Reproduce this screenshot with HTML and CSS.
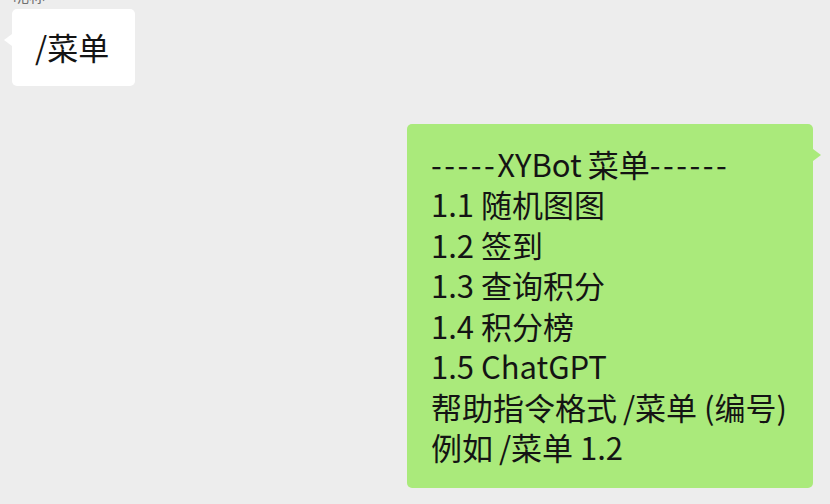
FILE: index.html
```html
<!DOCTYPE html>
<html lang="zh">
<head>
<meta charset="utf-8">
<link rel="stylesheet" href="styles.css">
</head>
<body>
<div class="chat">
  <div class="sender">昵称</div>
  <div class="row row-left">
    <div class="bubble bubble-in">/菜单</div>
  </div>
  <div class="row row-right">
    <div class="bubble bubble-out"><span class="dash">-----</span>XYBot<span class="sp">菜单</span><span class="dash">------</span><br>1.1 随机图图<br>1.2 签到<br>1.3 查询积分<br>1.4 积分榜<br>1.5 ChatGPT<br>帮助指令格式<span class="sp">/菜单</span> (编号)<br>例如<span class="sp">/菜单</span> 1.2</div>
  </div>
</div>
</body>
</html>
```
FILE: styles.css
```css
html, body {
  margin: 0;
  padding: 0;
  background: #ededed;
  height: 100%;
  overflow: hidden;
}
.chat {
  display: flex;
  flex-direction: column;
  font-family: "Noto Sans CJK SC", "Liberation Sans", sans-serif;
}
.sender {
  font-size: 16px;
  line-height: 16px;
  color: #707070;
  margin: -13px 0 0 13px;
  height: 16px;
}
.row {
  display: flex;
}
.row-left {
  justify-content: flex-start;
  padding-left: 12px;
  margin-top: 6px;
}
.row-right {
  justify-content: flex-end;
  padding-right: 17px;
  margin-top: 38px;
}
.bubble {
  position: relative;
  font-size: 31px;
  line-height: 40.5px;
  color: #141414;
  border-radius: 5px;
  white-space: nowrap;
}
.bubble-in {
  background: #ffffff;
  padding: 18px 26px 18px 23px;
}
.bubble-out {
  background: #aaea7b;
  padding: 20px 26px 20px 24px;
}
.dash {
  letter-spacing: 2.5px;
}
.sp {
  margin-left: 6px;
}
.bubble-in::before,
.bubble-out::after {
  content: "";
  position: absolute;
  top: 25px;
  width: 0;
  height: 0;
  border-top: 6px solid transparent;
  border-bottom: 6px solid transparent;
}
.bubble-in::before {
  left: -8px;
  border-right: 8px solid #ffffff;
}
.bubble-out::after {
  right: -8px;
  border-left: 8px solid #aaea7b;
}
```
